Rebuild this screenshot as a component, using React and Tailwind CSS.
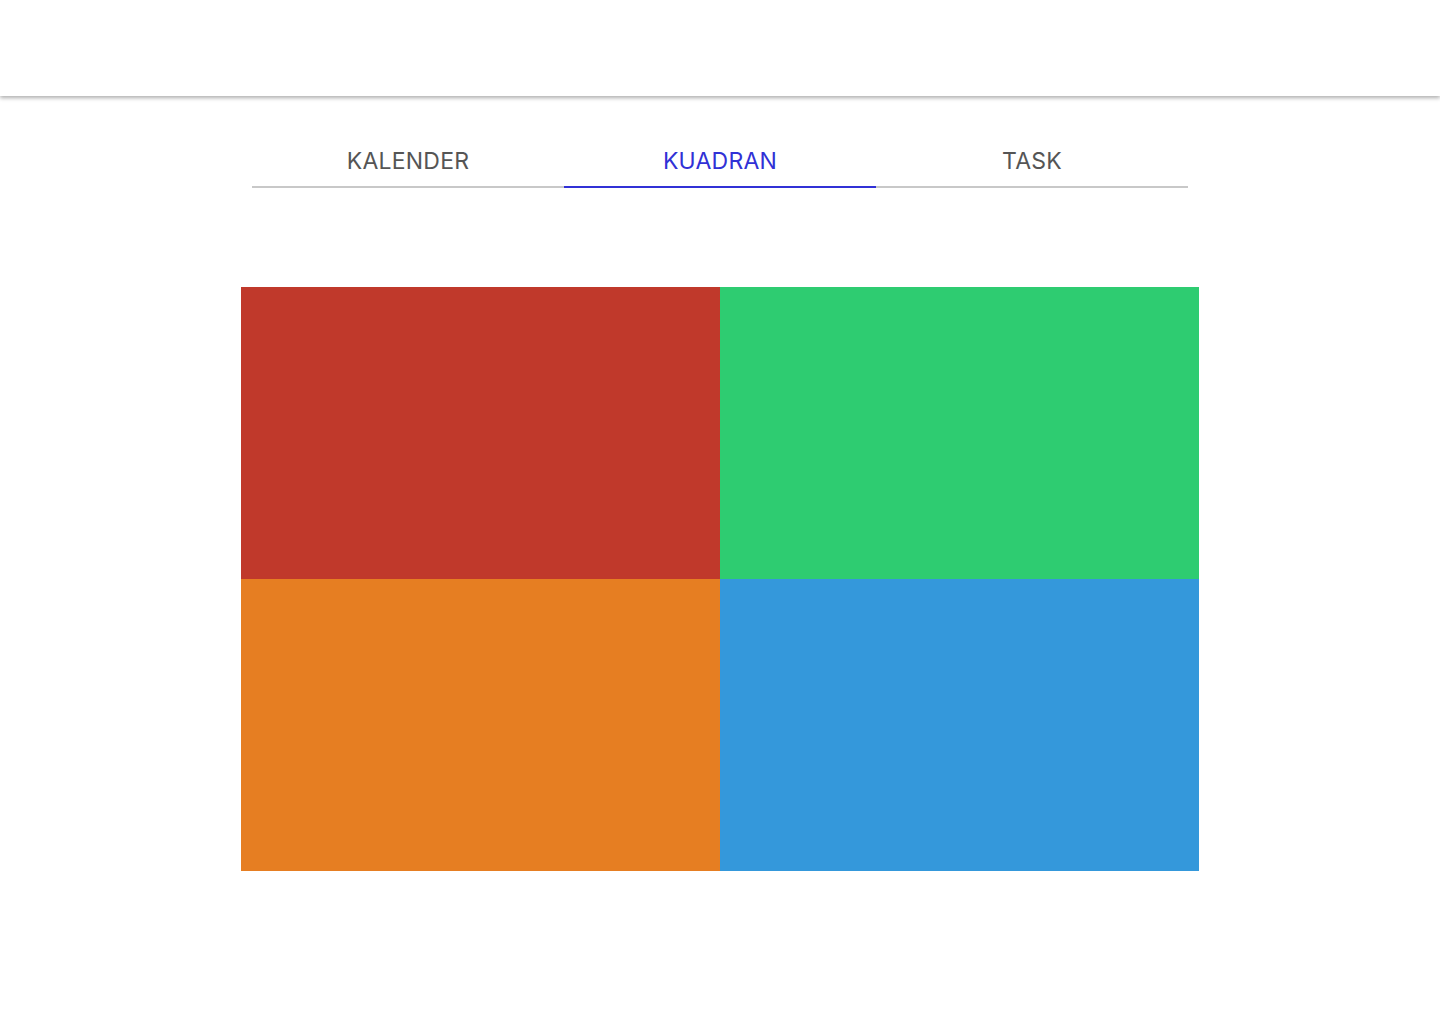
import React, { useState } from 'react'

const tabs = ['KALENDER', 'KUADRAN', 'TASK']

const App = () => {
  const [active, setActive] = useState(1)

  return (
    <div className="min-h-screen bg-white" style={{ fontFamily: 'Inter, Roboto, sans-serif' }}>
      <header className="h-24 bg-white shadow-[0_2px_4px_rgba(0,0,0,0.32)]" />

      <nav className="mx-auto mt-11 flex w-[936px]">
        {tabs.map((t, i) => (
          <button
            key={t}
            onClick={() => setActive(i)}
            className={`flex h-12 flex-1 items-center justify-center border-b-2 pb-1 text-[23px] tracking-[0.01em] ${
              i === active ? 'border-[#3131d6] text-[#3131d6]' : 'border-[#c8c8c8] text-[#555555]'
            }`}
          >
            {t}
          </button>
        ))}
      </nav>

      <div className="mx-auto mt-[99px] grid w-[958px] grid-cols-2 grid-rows-[292px_292px]">
        <div className="bg-[#c0392b]" />
        <div className="bg-[#2ecc71]" />
        <div className="bg-[#e67e22]" />
        <div className="bg-[#3498db]" />
      </div>
    </div>
  )
}

export default App
